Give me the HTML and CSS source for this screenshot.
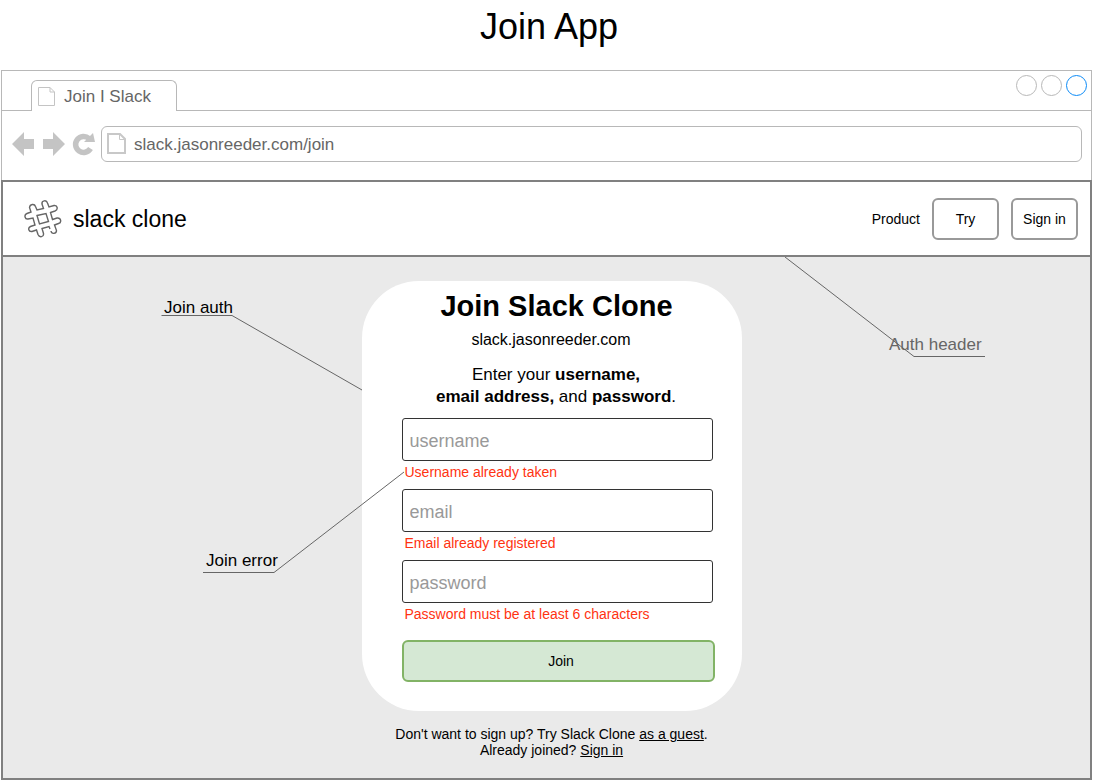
FILE: index.html
```html
<!DOCTYPE html>
<html lang="en">
<head>
<meta charset="utf-8">
<title>Join App</title>
<link rel="stylesheet" href="styles.css">
</head>
<body>
<div class="board-title">Join App</div>
<div class="window">
  <div class="tab-strip">
    <div class="tab">
      <svg class="tab-icon" width="17" height="20" viewBox="0 0 17 20"><path d="M.5.5H12L16.500 5V18.500H.5ZM12 .5V5H16.500" fill="none" stroke="#c4c4c4"/></svg>
      <span>Join I Slack</span>
    </div>
    <div class="window-controls"><i class="dot"></i><i class="dot"></i><i class="dot dot-active"></i></div>
  </div>
  <div class="toolbar">
    <button class="nav-button" aria-label="Back"><svg width="23" height="24" viewBox="0 0 23 24"><path d="M0 12 12 0V7H22V17H12V24Z" fill="#c4c4c4"/></svg></button>
    <button class="nav-button" aria-label="Forward"><svg width="23" height="24" viewBox="0 0 23 24"><path d="M23 12 11 0V7H1V17H11V24Z" fill="#c4c4c4"/></svg></button>
    <button class="nav-button" aria-label="Reload"><svg width="23" height="24" viewBox="0 0 23 24"><path d="M18.500 16.500A8 8 0 1 1 17 6.500" fill="none" stroke="#c4c4c4" stroke-width="5.500"/><path d="M21 1 23 10 12 10Z" fill="#c4c4c4"/></svg></button>
    <label class="address">
      <svg width="19" height="21" viewBox="0 0 19 21"><path d="M1 1H13L18 6V20H1Z" fill="none" stroke="#c8c8c8" stroke-width="2"/><path d="M12.500 1V6.500H18" fill="none" stroke="#c8c8c8"/></svg>
      <input type="text" class="address-input" value="slack.jasonreeder.com/join" aria-label="Address">
    </label>
  </div>
  <div class="page">
    <header class="header">
      <svg class="logo" width="38" height="38" viewBox="0 0 38 38" fill="none" stroke="#666" stroke-width="1.400">
        <path d="M27 31C27.500 34.500 32.500 34 32.500 30.500L30.500 25 34.500 23.500C38 22.500 37 17.500 33 18L28.500 19.500 26.500 12.500 31 11C34.500 9.500 33.500 5 30 5.500L25 7 23.500 3C22.500-.5 17.500.5 18 4L19.500 8.500 13 10 11.500 6.500C10.500 3.500 6 4 5.500 7.500L7 12 3 13.500C-.5 15 1 19.500 4 19L9 18 11 25 6.500 26.500C3.500 28 4.500 32 8 31.500L12.500 30 14 34.500C15.500 38 20 37 19.500 33.500L18 28.500 25 26.500 26 29"/>
        <path d="M13 15.500 22 13.500 24.500 21.500 15.500 24Z"/>
      </svg>
      <span class="brand">slack clone</span>
      <nav class="nav">
        <a class="nav-link" href="#">Product</a>
        <button class="outline-button">Try</button>
        <button class="outline-button">Sign in</button>
      </nav>
    </header>
    <main class="main">
      <form class="card">
        <h1 class="card-title">Join Slack Clone</h1>
        <p class="card-url">slack.jasonreeder.com</p>
        <p class="card-lead">Enter your <b>username,</b><br><b>email address,</b> and <b>password</b>.</p>
        <div class="fields">
          <div class="field"><input class="field-input" type="text" placeholder="username" aria-label="username" aria-describedby="username-error"><p class="error" id="username-error">Username already taken</p></div>
          <div class="field"><input class="field-input" type="email" placeholder="email" aria-label="email" aria-describedby="email-error"><p class="error" id="email-error">Email already registered</p></div>
          <div class="field"><input class="field-input" type="password" placeholder="password" aria-label="password" aria-describedby="password-error"><p class="error" id="password-error">Password must be at least 6 characters</p></div>
        </div>
        <button class="join-button" type="button">Join</button>
      </form>
      <p class="footnote">Don't want to sign up? Try Slack Clone <a href="#">as a guest</a>.<br>Already joined? <a href="#">Sign in</a></p>
      <svg class="callouts" width="1088" height="520" viewBox="0 0 1088 520">
        <g fill="none" stroke="#666">
          <path d="M158.500 58.500H229L359 133"/>
          <path d="M200 315.500H271L401 215"/>
          <path d="M782 0 911 99.500H982"/>
        </g>
        <text x="161" y="56">Join auth</text>
        <text x="203" y="309">Join error</text>
        <text class="callout-muted" x="886" y="93">Auth header</text>
      </svg>
    </main>
  </div>
</div>
</body>
</html>
```
FILE: styles.css
```css
* { box-sizing: border-box; }

body {
  margin: 0;
  padding: 0 3px 1px 1px;
  min-height: 100vh;
  display: flex;
  flex-direction: column;
  background: #fff;
  color: #000;
  font-family: "Liberation Sans", Arial, sans-serif;
  font-size: 14px;
}

button, input { font: inherit; color: inherit; }
h1, p { margin: 0; }
a { color: inherit; }
svg { flex: none; }

.board-title {
  padding: 6px 0 22px 5px;
  text-align: center;
  font-size: 36px;
  line-height: 42px;
}

.window {
  flex: 1;
  display: flex;
  flex-direction: column;
  border-top: 1px solid #b8b8b8;
}

.tab-strip {
  display: flex;
  justify-content: space-between;
  align-items: flex-end;
  height: 40px;
  padding: 0 4px 0 29px;
  border: solid #b8b8b8;
  border-width: 0 1px 1px;
}

.tab {
  display: flex;
  align-items: center;
  gap: 9px;
  width: 146px;
  height: 31px;
  margin-bottom: -1px;
  padding: 2px 6px 0;
  border: 1px solid #b8b8b8;
  border-bottom: 0;
  border-radius: 6px 6px 0 0;
  background: #fff;
  color: #666;
  font-size: 17px;
}

.window-controls { display: flex; gap: 4px; align-self: flex-start; padding-top: 4px; }
.dot { width: 21px; height: 21px; border: 1px solid #b8b8b8; border-radius: 50%; }
.dot-active { border-color: #0c8bf7; }

.toolbar {
  display: flex;
  align-items: center;
  gap: 7px;
  height: 69px;
  padding: 0 9px 4px 10px;
  border: solid #b8b8b8;
  border-width: 0 1px;
}

.nav-button { display: flex; padding: 0; border: 0; background: none; }

.address {
  flex: 1;
  display: flex;
  align-items: center;
  gap: 8px;
  height: 36px;
  margin-left: -1px;
  padding: 0 5px;
  border: 1px solid #b8b8b8;
  border-radius: 6px;
}

.address-input {
  flex: 1;
  min-width: 0;
  padding: 2px 0 0;
  border: 0;
  outline: 0;
  color: #666;
  font-size: 17px;
}

.page {
  flex: 1;
  display: flex;
  flex-direction: column;
  border: 2px solid #808080;
}

.header {
  display: flex;
  align-items: center;
  min-height: 75px;
  padding: 0 12px 0 21px;
  border-bottom: 2px solid #808080;
}

.brand { margin-left: 11px; padding-top: 2px; font-size: 23px; }
.nav { display: flex; align-items: center; gap: 12px; margin-left: auto; }
.nav-link { text-decoration: none; }

.outline-button {
  width: 67px;
  height: 42px;
  padding: 0;
  border: 2px solid #999;
  border-radius: 6px;
  background: #fff;
}

.main {
  position: relative;
  flex: 1;
  display: flex;
  flex-direction: column;
  align-items: center;
  padding: 24px 0 19px 10px;
  background: #eaeaea;
}

.card {
  width: 380px;
  max-width: 100%;
  padding: 8px 27px 29px 40px;
  border-radius: 57px;
  background: #fff;
  text-align: center;
}

.card-title { margin-right: 3px; font-size: 29px; line-height: 34px; }
.card-url { margin: 7px 14px 14px 0; font-size: 16px; line-height: 20px; }
.card-lead { margin-right: 4px; font-size: 17px; line-height: 22px; }

.fields { display: flex; flex-direction: column; gap: 9px; margin: 10px 2px 18px 0; }

.field-input {
  display: block;
  width: 100%;
  height: 43px;
  padding: 4px 7px 0;
  border: 1px solid #333;
  border-radius: 3px;
  background: #fff;
  font-size: 18px;
}

.field-input::placeholder { color: #999; opacity: 1; }
.error { margin: 3px 0 0 3px; color: #ff3311; line-height: 16px; text-align: left; }

.join-button {
  display: block;
  width: 100%;
  height: 42px;
  padding: 0 0 0 6px;
  border: 2px solid #82b366;
  border-radius: 6px;
  background: #d5e8d4;
}

.footnote { margin-top: 15px; line-height: 16px; text-align: center; }

.callouts {
  position: absolute;
  top: 0;
  left: calc(50% - 544px);
  font-size: 17px;
  pointer-events: none;
}

.callout-muted { fill: #666; }
```
